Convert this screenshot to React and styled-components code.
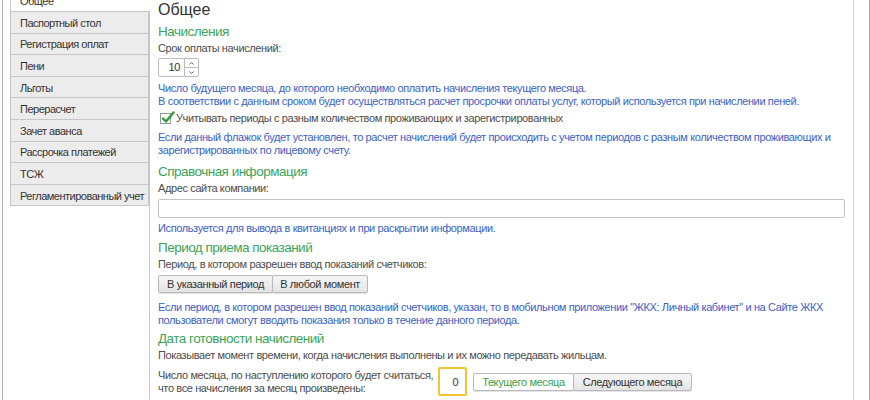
import React from "react";
import styled, { createGlobalStyle } from "styled-components";

const Global = createGlobalStyle`
  html, body { margin: 0; padding: 0; background: #fff; }
  body { font-family: "Liberation Sans", Arial, sans-serif; }
`;

const Frame = styled.div`
  width: 870px;
  height: 400px;
  overflow: hidden;
  box-sizing: border-box;
  display: flex;
  border-right: 1px solid #a8a8a8;
  background: #fff;
`;

const Gutter = styled.div`
  flex: none;
  width: 8px;
  box-sizing: border-box;
  margin-left: 2px;
  border-left: 1px solid #b4b4b4;
`;

const Sidebar = styled.nav`
  width: 140px;
  flex: none;
  box-sizing: border-box;
  border-right: 1px solid #c6c6c6;
  margin-top: -9.6px;
  display: flex;
  flex-direction: column;
`;

const Tab = styled.div`
  height: 21.6px;
  box-sizing: border-box;
  padding: 1px 0 0 9px;
  display: flex;
  align-items: center;
  font-size: 11px;
  letter-spacing: -0.5px;
  color: #333;
  background: ${(p) => (p.$active ? "#fff" : "#ececec")};
  border: 1px solid #c6c6c6;
  border-top: none;
  border-right: ${(p) => (p.$active ? "none" : "1px solid #c6c6c6")};
  margin-right: ${(p) => (p.$active ? "-1px" : "0")};
  white-space: nowrap;
`;

const Panel = styled.main`
  flex: 1;
  box-sizing: border-box;
  padding: 0 8px;
  border-right: 1px solid #d4d4d4;
  margin-right: 15px;
  font-size: 11px;
  letter-spacing: -0.38px;
  color: #4d4d4d;
`;

const Title = styled.h1`
  margin: 0;
  font-weight: normal;
  font-size: 16px;
  letter-spacing: 0;
  line-height: 20px;
  color: #333;
`;

const Heading = styled.h2`
  margin: ${(p) => p.$top}px 0 0;
  font-weight: normal;
  font-size: 13.5px;
  letter-spacing: -0.52px;
  line-height: 18px;
  color: #3ca45c;
`;

const Label = styled.div`
  margin-top: ${(p) => p.$top ?? 1}px;
  line-height: 13px;
  color: #4d4d4d;
`;

const Hint = styled.div`
  margin-top: ${(p) => p.$top}px;
  line-height: 13px;
  color: #3a62c6;
`;

const Spin = styled.div`
  margin-top: 3px;
  width: 41px;
  height: 19px;
  box-sizing: border-box;
  border: 1px solid #bcbcbc;
  border-radius: 2px;
  display: flex;
`;

const SpinValue = styled.div`
  flex: 1;
  text-align: right;
  padding-right: 4px;
  line-height: 17px;
  color: #333;
`;

const SpinButtons = styled.div`
  width: 13px;
  border-left: 1px solid #bcbcbc;
  display: flex;
  flex-direction: column;
`;

const SpinArrow = styled.div`
  flex: 1;
  display: flex;
  align-items: center;
  justify-content: center;
  & + & { border-top: 1px solid #bcbcbc; }
`;

const CheckRow = styled.label`
  margin-top: 4px;
  height: 13px;
  display: flex;
  align-items: center;
  gap: 5px;
  padding-left: 2px;
  line-height: 13px;
  color: #4d4d4d;
`;

const Box = styled.span`
  position: relative;
  width: 11px;
  height: 11px;
  box-sizing: border-box;
  border: 1px solid #9a9a9a;
  background: #fff;
  flex: none;
  svg { position: absolute; left: 0; top: -3px; }
`;

const TextInput = styled.div`
  margin-top: 4px;
  height: 19px;
  box-sizing: border-box;
  border: 1px solid #c4c4c4;
  border-radius: 2px;
`;

const Toggle = styled.div`
  margin-top: ${(p) => p.$top ?? 0}px;
  display: inline-flex;
  height: 18px;
`;

const ToggleButton = styled.div`
  height: 18px;
  box-sizing: border-box;
  padding: 0 ${(p) => p.$pad}px;
  display: flex;
  align-items: center;
  border: 1px solid #b9b9b9;
  border-radius: 2px;
  color: ${(p) => (p.$on ? "#3a9f45" : "#333")};
  background: ${(p) => (p.$on ? "#fff" : "linear-gradient(#f6f6f6, #e4e4e4)")};
  box-shadow: 0 1px 1px rgba(0, 0, 0, 0.12);
  white-space: nowrap;
  & + & { margin-left: -1px; }
`;

const DateRow = styled.div`
  margin-top: 5px;
  display: flex;
  align-items: center;
  gap: 5px;
`;

const DateLabel = styled.div`
  line-height: 13px;
  color: #4d4d4d;
`;

const DayInput = styled.div`
  width: 29px;
  height: 29px;
  box-sizing: border-box;
  border: 2px solid #f2c530;
  border-radius: 2px;
  display: flex;
  align-items: center;
  justify-content: flex-end;
  padding-right: 7px;
  color: #333;
  margin-right: 1px;
`;

const tabs = [
  "Общее",
  "Паспортный стол",
  "Регистрация оплат",
  "Пени",
  "Льготы",
  "Перерасчет",
  "Зачет аванса",
  "Рассрочка платежей",
  "ТСЖ",
  "Регламентированный учет",
];

const Arrow = ({ up }) => (
  <svg width="5" height="3" viewBox="0 0 5 3">
    <path d={up ? "M0.5 2.5 L2.5 0.5 L4.5 2.5" : "M0.5 0.5 L2.5 2.5 L4.5 0.5"} fill="none" stroke="#666" strokeWidth="1" />
  </svg>
);

const Check = () => (
  <svg width="14" height="13" viewBox="0 0 14 13">
    <path d="M2 7.5 L5 10.5 L12.5 1.5" fill="none" stroke="#2f9a3c" strokeWidth="2.4" strokeLinecap="round" strokeLinejoin="round" />
  </svg>
);

export default function App() {
  return (
    <>
      <Global />
      <Frame>
        <Gutter />
        <Sidebar>
          {tabs.map((t, i) => (
            <Tab key={t} $active={i === 0}>{t}</Tab>
          ))}
        </Sidebar>
        <Panel>
          <Title>Общее</Title>

          <Heading $top={3}>Начисления</Heading>
          <Label>Срок оплаты начислений:</Label>
          <Spin>
            <SpinValue>10</SpinValue>
            <SpinButtons>
              <SpinArrow><Arrow up /></SpinArrow>
              <SpinArrow><Arrow /></SpinArrow>
            </SpinButtons>
          </Spin>
          <Hint $top={5}>
            Число будущего месяца, до которого необходимо оплатить начисления текущего месяца.
            <br />
            В соответствии с данным сроком будет осуществляться расчет просрочки оплаты услуг, который используется при начислении пеней.
          </Hint>
          <CheckRow>
            <Box><Check /></Box>
            Учитывать периоды с разным количеством проживающих и зарегистрированных
          </CheckRow>
          <Hint $top={6}>
            Если данный флажок будет установлен, то расчет начислений будет происходить с учетом периодов с разным количеством проживающих и зарегистрированных по лицевому счету.
          </Hint>

          <Heading $top={6}>Справочная информация</Heading>
          <Label>Адрес сайта компании:</Label>
          <TextInput />
          <Hint $top={4}>Используется для вывода в квитанциях и при раскрытии информации.</Hint>

          <Heading $top={4}>Период приема показаний</Heading>
          <Label>Период, в котором разрешен ввод показаний счетчиков:</Label>
          <Toggle $top={4}>
            <ToggleButton $pad={8}>В указанный период</ToggleButton>
            <ToggleButton $pad={7}>В любой момент</ToggleButton>
          </Toggle>
          <Hint $top={8}>
            Если период, в котором разрешен ввод показаний счетчиков, указан, то в мобильном приложении "ЖКХ: Личный кабинет" и на Сайте ЖКХ пользователи смогут вводить показания только в течение данного периода.
          </Hint>

          <Heading $top={3}>Дата готовности начислений</Heading>
          <Label>Показывает момент времени, когда начисления выполнены и их можно передавать жильцам.</Label>
          <DateRow>
            <DateLabel>
              Число месяца, по наступлению которого будет считаться,
              <br />
              что все начисления за месяц произведены:
            </DateLabel>
            <DayInput>0</DayInput>
            <Toggle>
              <ToggleButton $pad={8} $on>Текущего месяца</ToggleButton>
              <ToggleButton $pad={9}>Следующего месяца</ToggleButton>
            </Toggle>
          </DateRow>
        </Panel>
      </Frame>
    </>
  );
}
